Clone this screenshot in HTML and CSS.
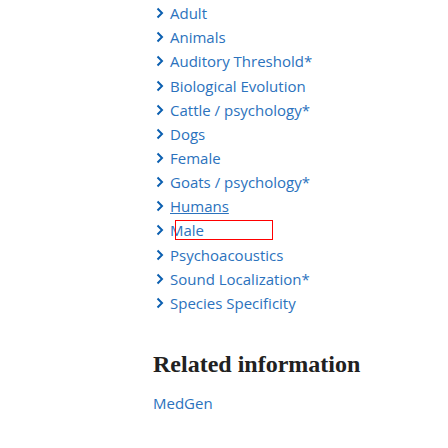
FILE: index.html
```html
<!DOCTYPE html>
<html>
<head>
<meta charset="utf-8">
<link rel="stylesheet" href="styles.css">
</head>
<body>
<div class="page">
  <ul class="terms">
    <li><svg class="chev" viewBox="0 0 8 12"><path d="M1.5 1.5 L6 6 L1.5 10.5"/></svg><a>Adult</a></li>
    <li><svg class="chev" viewBox="0 0 8 12"><path d="M1.5 1.5 L6 6 L1.5 10.5"/></svg><a>Animals</a></li>
    <li><svg class="chev" viewBox="0 0 8 12"><path d="M1.5 1.5 L6 6 L1.5 10.5"/></svg><a>Auditory Threshold*</a></li>
    <li><svg class="chev" viewBox="0 0 8 12"><path d="M1.5 1.5 L6 6 L1.5 10.5"/></svg><a>Biological Evolution</a></li>
    <li><svg class="chev" viewBox="0 0 8 12"><path d="M1.5 1.5 L6 6 L1.5 10.5"/></svg><a>Cattle / psychology*</a></li>
    <li><svg class="chev" viewBox="0 0 8 12"><path d="M1.5 1.5 L6 6 L1.5 10.5"/></svg><a>Dogs</a></li>
    <li><svg class="chev" viewBox="0 0 8 12"><path d="M1.5 1.5 L6 6 L1.5 10.5"/></svg><a>Female</a></li>
    <li><svg class="chev" viewBox="0 0 8 12"><path d="M1.5 1.5 L6 6 L1.5 10.5"/></svg><a>Goats / psychology*</a></li>
    <li><svg class="chev" viewBox="0 0 8 12"><path d="M1.5 1.5 L6 6 L1.5 10.5"/></svg><a class="hover">Humans</a></li>
    <li class="marked"><svg class="chev" viewBox="0 0 8 12"><path d="M1.5 1.5 L6 6 L1.5 10.5"/></svg><a>Male</a><span class="box"></span></li>
    <li><svg class="chev" viewBox="0 0 8 12"><path d="M1.5 1.5 L6 6 L1.5 10.5"/></svg><a>Psychoacoustics</a></li>
    <li><svg class="chev" viewBox="0 0 8 12"><path d="M1.5 1.5 L6 6 L1.5 10.5"/></svg><a>Sound Localization*</a></li>
    <li><svg class="chev" viewBox="0 0 8 12"><path d="M1.5 1.5 L6 6 L1.5 10.5"/></svg><a>Species Specificity</a></li>
  </ul>
  <h2 class="heading">Related information</h2>
  <a class="link">MedGen</a>
  <h2 class="heading next">LinkOut - more resources</h2>
</div>
</body>
</html>
```
FILE: styles.css
```css
html, body {
  margin: 0;
  padding: 0;
  background: #ffffff;
  overflow: hidden;
}
.page {
  padding-left: 153px;
  font-family: "Open Sans", "Noto Sans", sans-serif;
}
.terms {
  list-style: none;
  margin: 0;
  padding: 1px 0 0 3px;
}
.terms li {
  position: relative;
  display: flex;
  align-items: center;
  height: 24.17px;
  font-size: 15px;
  color: #2b72bd;
}
.chev {
  width: 8px;
  height: 12px;
  margin-right: 6px;
  fill: none;
  stroke: #0b5fb0;
  stroke-width: 2;
}
.terms a {
  color: #2b72bd;
  white-space: nowrap;
}
.terms a.hover {
  text-decoration: underline;
}
.box {
  position: absolute;
  left: 19px;
  top: 2px;
  width: 96px;
  height: 18px;
  border: 1.5px solid #ff0000;
}
.heading {
  margin: 34px 0 0 0;
  font-family: "Liberation Serif", "DejaVu Serif", serif;
  font-weight: bold;
  font-size: 24px;
  line-height: 30px;
  color: #212121;
}
.link {
  display: block;
  margin-top: 14px;
  font-size: 15px;
  line-height: 20px;
  color: #2b72bd;
}
.next {
  margin-top: 37px;
}
```
